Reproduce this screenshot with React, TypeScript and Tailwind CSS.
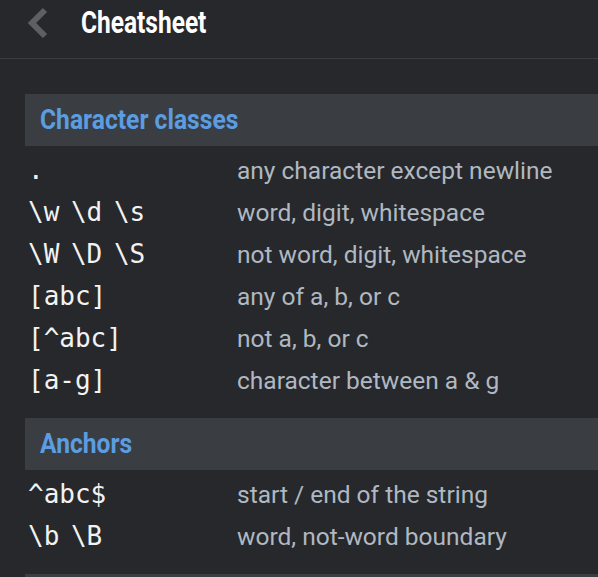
const sections = [
  {
    title: "Character classes",
    rows: [
      [".", "any character except newline"],
      ["\\w \\d \\s", "word, digit, whitespace"],
      ["\\W \\D \\S", "not word, digit, whitespace"],
      ["[abc]", "any of a, b, or c"],
      ["[^abc]", "not a, b, or c"],
      ["[a-g]", "character between a & g"],
    ],
  },
  {
    title: "Anchors",
    rows: [
      ["^abc$", "start / end of the string"],
      ["\\b \\B", "word, not-word boundary"],
    ],
  },
];

const sans = "font-['Roboto',sans-serif]";

export default function App() {
  return (
    <div className="min-h-screen bg-[#26282c] overflow-hidden">
      <div className="h-[59px] pb-[12px] flex items-center border-b border-[#3a3c40]">
        <svg width="22" height="32" viewBox="0 0 22 32" className="ml-[26px]">
          <path d="M19 3 L6 16 L19 29" fill="none" stroke="#5c6065" strokeWidth="6" />
        </svg>
        <h1 className={`${sans} ml-[33px] inline-block origin-left scale-x-[0.79] text-[31px] font-bold text-white`}>
          Cheatsheet
        </h1>
      </div>

      <div className="pt-[35px] pl-[25px]">
        {sections.map((s, i) => (
          <div key={s.title} className={i > 0 ? "mt-[15px]" : ""}>
            <div className="h-[52px] bg-[#3a3d41] flex items-center pl-[15px]">
              <h2 className={`${sans} inline-block origin-left scale-x-[0.88] text-[28px] font-bold text-[#5b9de0]`}>
                {s.title}
              </h2>
            </div>
            <div className="pt-[3px] pb-[2px] pl-[3px]">
              {s.rows.map(([code, desc]) => (
                <div key={code} className="h-[42px] flex items-baseline leading-[42px]">
                  <div className="w-[209px] shrink-0 font-['DejaVu_Sans_Mono',monospace] text-[26px] [word-spacing:-4px] text-[#f2f2f2] whitespace-pre">
                    {code}
                  </div>
                  <div className={`${sans} text-[24.5px] text-[#b0b8c1]`}>{desc}</div>
                </div>
              ))}
            </div>
          </div>
        ))}
        <div className="mt-[15px] h-[52px] bg-[#3a3d41]" />
      </div>
    </div>
  );
}
